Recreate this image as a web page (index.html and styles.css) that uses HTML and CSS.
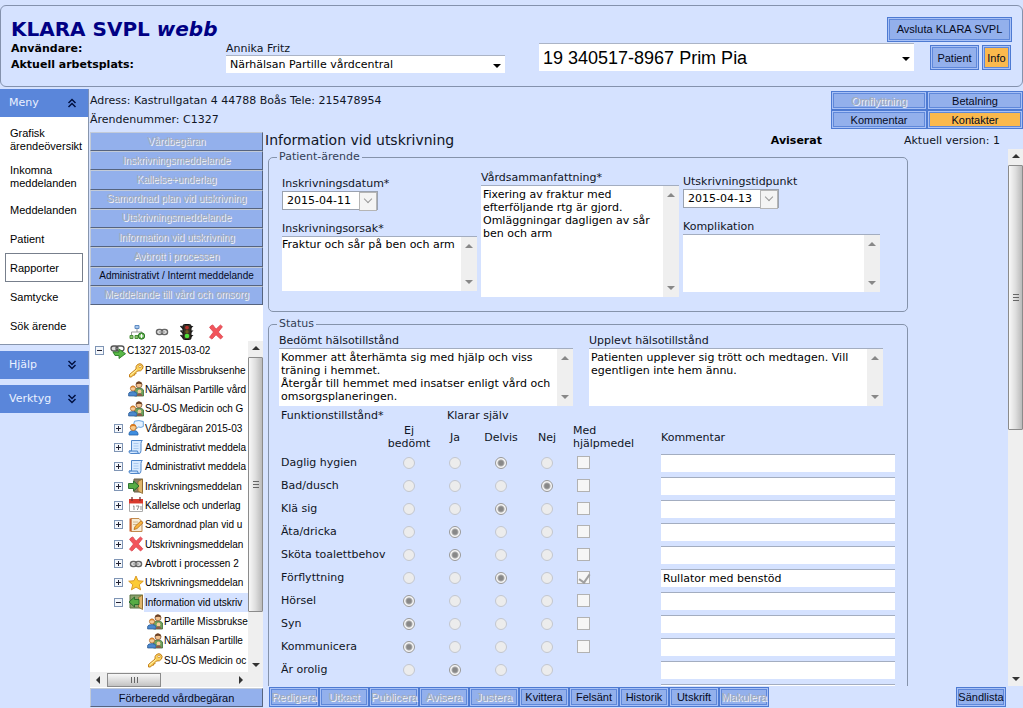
FILE: index.html
```html
<!DOCTYPE html>
<html lang="sv">
<head>
<meta charset="utf-8">
<title>KLARA SVPL webb</title>
<link rel="stylesheet" href="styles.css">
</head>
<body>
<svg class="defs" aria-hidden="true">
  <symbol id="key" viewBox="0 0 16 16"><path d="M1.500 12.500 8 7q-.5-3 1.500-4.500Q12 .8 14 2.500T14.500 7Q13 9.500 9.500 9L8 10.500v1.300H6.500v1.400H5L3.500 15H1.500z" fill="#fbd25a" stroke="#c4801c"/><circle cx="12" cy="4.500" r="1.200" fill="#fff" stroke="#c4801c" stroke-width=".7"/><path d="M2.500 13 9 7.500" stroke="#fff2b0"/></symbol>
  <symbol id="people" viewBox="0 0 16 16"><path d="M6.500 15V9q0-2 4-2t5 2v6z" fill="#6fa35c" stroke="#3f6b37" stroke-width=".8"/><circle cx="11" cy="3.800" r="3" fill="#f1c08e" stroke="#72492b" stroke-width=".7"/><path d="M7.800 3.500Q8.500.5 11 .6t3.300 3q-3-1.700-6.500-.1z" fill="#6b4226"/><circle cx="5" cy="7.500" r="2.600" fill="#f6cb98" stroke="#a05a22" stroke-width=".7"/><path d="M2.300 7Q3 4.600 5 4.700T7.700 7Q5 5.700 2.300 7z" fill="#d9822b"/><path d="M.6 15v-2.500Q1 10.600 5 10.600t4 2.400v2z" fill="#4b88cc" stroke="#28558c" stroke-width=".7"/><circle cx="11.500" cy="10.500" r="1.900" fill="#f6cb98"/><path d="M8.800 15q.2-2.700 2.700-2.700t2.800 2.700z" fill="#8a5a48"/></symbol>
  <symbol id="talk" viewBox="0 0 16 16"><path d="M6.500 1.200Q11-.2 15.300 1.500v5Q13 8 10.500 7L8 9V6.300L5.500 5z" fill="#e4f1ff" stroke="#5c9bd8" stroke-width=".9"/><path d="M1 15q-.5-4.500 4.500-4.500T10 15z" fill="#3f8ee0" stroke="#2362a8" stroke-width=".8"/><circle cx="5.200" cy="7.500" r="3" fill="#f8c987" stroke="#b5661e" stroke-width=".8"/><path d="M2.200 7q.3-3 3-3T8 6.500Q5 5.500 2.200 7z" fill="#d9791e"/></symbol>
  <symbol id="scroll" viewBox="0 0 16 16"><path d="M3.500 1.500h10.800q-1.300 1-1.300 3v7q0 3-2 3H2.800q-2 0-1.800-2.500h2.500z" fill="#d8eaff" stroke="#4f86c9"/><path d="M1 12h8.500q0 2.500 1.700 2.500" fill="#b9d7fa" stroke="#4f86c9"/><path d="M5.500 4.500h5M5.500 7h5M5.500 9.500h5" stroke="#a0c3ec" stroke-width=".8"/></symbol>
  <symbol id="door" viewBox="0 0 16 16"><path d="M6 1h8.500v13H6z" fill="#8a7f62" stroke="#6a5f45"/><path d="M10 3.500 14.500 1v14.500L10 13z" fill="#e0b66c" stroke="#8b672c" stroke-width=".8"/><path d="M.5 5.500h5V3L11 8l-5.500 5v-2.500h-5z" fill="#57ac45" stroke="#23692a" stroke-width=".9"/></symbol>
  <symbol id="doorout" viewBox="0 0 16 16"><path d="M2 1h12.500v13H2z" fill="#8ba06a" stroke="#56703f"/><path d="M10.500 3.500 14.500 1v14.500l-4-2.500z" fill="#e0b66c" stroke="#8b672c" stroke-width=".8"/><path d="M11 5.500H6.500V3L1 8l5.500 5v-2.500H11z" fill="#57ac45" stroke="#23692a" stroke-width=".9"/></symbol>
  <symbol id="calendar" viewBox="0 0 16 16"><path d="M1.500 2.500h13v12h-13z" fill="#fff" stroke="#aaa"/><path d="M1 2h14v5H1z" fill="#d83a2e"/><path d="M4 0v4M12 0v4" stroke="#733" stroke-width="1.300"/><path d="M1.500 6.500h13" stroke="#f0a49c"/><path d="m5 9.500 1-.7V13M8 9h3l-1.700 4M13 9v4" stroke="#777" fill="none" stroke-width=".8"/></symbol>
  <symbol id="note" viewBox="0 0 16 16"><path d="M3 1.500h8l3 3v10H3z" fill="#f7ecd6" stroke="#c28b4f"/><path d="M2.500 1.500v13" stroke="#c9612d" stroke-width="2"/><path d="M5 5h5M5 7.500h4" stroke="#c9a97a" stroke-width=".8"/><path d="m6 12.500 1-3L13 3.800l2 2-6 5.800z" fill="#f8b33c" stroke="#b06817" stroke-width=".8"/></symbol>
  <symbol id="cross" viewBox="0 0 16 16"><path d="M2.700 2 4.800.9 8 5.200 12.400 1l2 1.700L10.300 8l4.500 4.800-2.200 2.200L8 10.800 4 15.100l-2.500-1.800L5.500 8 1.600 3.500z" fill="#f2545b" stroke="#d9444e" stroke-width=".8"/></symbol>
  <symbol id="chain" viewBox="0 0 16 16"><rect x="2.500" y="5.500" width="6" height="5" rx="2.500" fill="none" stroke="#666" stroke-width="1.500"/><rect x="7.500" y="5.500" width="6" height="5" rx="2.500" fill="none" stroke="#666" stroke-width="1.500"/><path d="M4.500 8h7" stroke="#999" stroke-width="1.400"/></symbol>
  <symbol id="star" viewBox="0 0 16 16"><path d="m8 1 2 4.700 5.300.5-4 3.500 1.300 5.100L8 12.100l-4.600 2.700 1.300-5.100-4-3.500L6 5.700z" fill="#fccb35" stroke="#d8931b" stroke-width=".9"/></symbol>
  <symbol id="link" viewBox="0 0 16 16"><rect x="1" y="3" width="7" height="5" rx="2.500" fill="#ddd" stroke="#555" stroke-width="1.300"/><rect x="6" y="3" width="8" height="5" rx="2.500" fill="none" stroke="#555" stroke-width="1.300"/><path d="M3 9h6V6l6.500 4.700L9 15.500v-3H5z" fill="#5ab848" stroke="#2a7a26" stroke-width=".9"/></symbol>
  <symbol id="nodes" viewBox="0 0 16 16"><path d="M8 4v4M2.500 11V8H13v2" fill="none" stroke="#999"/><path d="M6 1.500h4v3H6z" fill="#a8c8ee" stroke="#5f8bc2"/><path d="M1 11.500h3v3H1zM6 11.500h3v3H6z" fill="#8bc46d" stroke="#4a8f3a"/><circle cx="12.500" cy="12" r="3.200" fill="#58ae42" stroke="#2b7428"/><path d="M12.500 10v4M10.500 12h4" stroke="#fff" stroke-width="1.200"/></symbol>
  <symbol id="traffic" viewBox="0 0 16 16"><path d="M1.500 2 14.500 2l-3 3zM1.500 6.500h13l-3 3zM1.500 11h13l-3 3z" fill="#222"/><path d="m1.500 2 3 3M1.500 6.500l3 3M1.500 11l3 3" stroke="#222" stroke-width="1.500"/><rect x="4" y=".5" width="8" height="15" rx="1.500" fill="#383025" stroke="#111"/><circle cx="8" cy="3.600" r="1.900" fill="#b6312a"/><circle cx="8" cy="7.800" r="1.700" fill="#6b5a20"/><circle cx="8" cy="12" r="2.300" fill="#4fe23a"/></symbol>
  <symbol id="up2" viewBox="0 0 10 10"><path d="M1.500 5 5 1.500 8.500 5M1.500 9 5 5.500 8.500 9" fill="none" stroke="#001040" stroke-width="1.500"/></symbol>
  <symbol id="down2" viewBox="0 0 10 10"><path d="M1.500 1 5 4.500 8.500 1M1.500 5 5 8.500 8.500 5" fill="none" stroke="#001040" stroke-width="1.500"/></symbol>
</svg>

<header class="top">
  <div class="top-row">
    <h1>KLARA SVPL <em>webb</em></h1>
    <button class="btn btn-exit">Avsluta KLARA SVPL</button>
  </div>
  <div class="top-fields">
    <div class="user">
      <b>Användare:</b><span>Annika Fritz</span>
      <label for="place">Aktuell arbetsplats:</label>
      <div class="combo"><select id="place"><option>Närhälsan Partille vårdcentral</option></select></div>
    </div>
    <div class="combo combo-patient"><select aria-label="Vald patient"><option>19 340517-8967 Prim Pia</option></select></div>
    <div class="top-buttons">
      <button class="btn btn-patient">Patient</button>
      <button class="btn btn-info orange">Info</button>
    </div>
  </div>
</header>

<div class="main">
  <nav class="side">
    <button class="side-head">Meny<svg><use href="#up2"/></svg></button>
    <div class="side-body">
      <a href="#">Grafisk ärendeöversikt</a>
      <a href="#">Inkomna meddelanden</a>
      <a href="#">Meddelanden</a>
      <a href="#">Patient</a>
      <a href="#" class="current">Rapporter</a>
      <a href="#">Samtycke</a>
      <a href="#">Sök ärende</a>
    </div>
    <button class="side-head">Hjälp<svg><use href="#down2"/></svg></button>
    <button class="side-head">Verktyg<svg><use href="#down2"/></svg></button>
  </nav>

  <div class="work">
    <div class="info">
      <div class="address">
        <p>Adress: Kastrullgatan 4 44788 Boås Tele: 215478954</p>
        <p>Ärendenummer: C1327</p>
      </div>
      <div class="info-buttons">
        <button class="btn" disabled>Omflyttning</button>
        <button class="btn">Betalning</button>
        <button class="btn">Kommentar</button>
        <button class="btn orange">Kontakter</button>
      </div>
    </div>

    <div class="columns">
      <aside class="case">
        <div class="stack">
          <button class="flat" disabled>Vårdbegäran</button>
          <button class="flat" disabled>Inskrivningsmeddelande</button>
          <button class="flat" disabled>Kallelse+underlag</button>
          <button class="flat" disabled>Samordnad plan vid utskrivning</button>
          <button class="flat" disabled>Utskrivningsmeddelande</button>
          <button class="flat" disabled>Information vid utskrivning</button>
          <button class="flat" disabled>Avbrott i processen</button>
          <button class="flat">Administrativt / Internt meddelande</button>
          <button class="flat" disabled>Meddelande till vård och omsorg</button>
        </div>
        <div class="tools">
          <button aria-label="Lägg till"><svg><use href="#nodes"/></svg></button>
          <button aria-label="Länka"><svg><use href="#chain"/></svg></button>
          <button aria-label="Status"><svg><use href="#traffic"/></svg></button>
          <button aria-label="Ta bort"><svg><use href="#cross"/></svg></button>
        </div>
        <div class="tree-box">
          <ul class="tree">
            <li><i class="tog minus"></i><svg><use href="#link"/></svg><span>C1327 2015-03-02</span></li>
            <li class="l1"><i class="gap"></i><svg><use href="#key"/></svg><span>Partille Missbruksenhe</span></li>
            <li class="l1"><i class="gap"></i><svg><use href="#people"/></svg><span>Närhälsan Partille vård</span></li>
            <li class="l1"><i class="gap"></i><svg><use href="#people"/></svg><span>SU-ÖS Medicin och G</span></li>
            <li class="l1"><i class="tog"></i><svg><use href="#talk"/></svg><span>Vårdbegäran 2015-03</span></li>
            <li class="l1"><i class="tog"></i><svg><use href="#scroll"/></svg><span>Administrativt meddela</span></li>
            <li class="l1"><i class="tog"></i><svg><use href="#scroll"/></svg><span>Administrativt meddela</span></li>
            <li class="l1"><i class="tog"></i><svg><use href="#door"/></svg><span>Inskrivningsmeddelan</span></li>
            <li class="l1"><i class="tog"></i><svg><use href="#calendar"/></svg><span>Kallelse och underlag</span></li>
            <li class="l1"><i class="tog"></i><svg><use href="#note"/></svg><span>Samordnad plan vid u</span></li>
            <li class="l1"><i class="tog"></i><svg><use href="#cross"/></svg><span>Utskrivningsmeddelan</span></li>
            <li class="l1"><i class="tog"></i><svg><use href="#chain"/></svg><span>Avbrott i processen 2</span></li>
            <li class="l1"><i class="tog"></i><svg><use href="#star"/></svg><span>Utskrivningsmeddelan</span></li>
            <li class="l1"><i class="tog minus"></i><svg><use href="#doorout"/></svg><span class="picked">Information vid utskriv</span></li>
            <li class="l2"><i class="gap"></i><svg><use href="#people"/></svg><span>Partille Missbrukse</span></li>
            <li class="l2"><i class="gap"></i><svg><use href="#people"/></svg><span>Närhälsan Partille</span></li>
            <li class="l2"><i class="gap"></i><svg><use href="#key"/></svg><span>SU-ÖS Medicin oc</span></li>
          </ul>
          <div class="vbar"><i class="up"></i><i class="thumb tree-thumb"></i><i class="down"></i></div>
        </div>
        <div class="hbar"><i class="left"></i><i class="thumb"></i><i class="right"></i></div>
        <button class="flat prepare">Förberedd vårdbegäran</button>
      </aside>

      <main class="doc">
        <div class="doc-head">
          <h2>Information vid utskrivning</h2>
          <b>Aviserat</b>
          <span>Aktuell version: 1</span>
        </div>
        <div class="doc-body">
          <form class="form">
            <fieldset>
              <legend>Patient-ärende</legend>
              <div class="patient">
                <div class="col first">
                  <label for="in-date">Inskrivningsdatum*</label>
                  <div class="date"><select id="in-date"><option>2015-04-11</option></select></div>
                  <label for="cause">Inskrivningsorsak*</label>
                  <div class="area short"><textarea id="cause">Fraktur och sår på ben och arm</textarea><div class="mini"><i class="up"></i><i class="down"></i></div></div>
                </div>
                <div class="col">
                  <label for="summary">Vårdsammanfattning*</label>
                  <div class="area tall"><textarea id="summary">Fixering av fraktur med efterföljande rtg är gjord. Omläggningar dagligen av sår ben och arm</textarea><div class="mini"><i class="up"></i><i class="down"></i></div></div>
                </div>
                <div class="col third">
                  <label for="out-date">Utskrivningstidpunkt</label>
                  <div class="date"><select id="out-date"><option>2015-04-13</option></select></div>
                  <label for="compl">Komplikation</label>
                  <div class="area"><textarea id="compl"></textarea><div class="mini"><i class="up"></i><i class="down"></i></div></div>
                </div>
              </div>
            </fieldset>
            <fieldset class="status">
              <legend>Status</legend>
              <div class="health">
                <div class="col">
                  <label for="judged">Bedömt hälsotillstånd</label>
                  <div class="area"><textarea id="judged">Kommer att återhämta sig med hjälp och viss träning i hemmet.
Återgår till hemmet med insatser enligt vård och omsorgsplaneringen.</textarea><div class="mini"><i class="up"></i><i class="down"></i></div></div>
                </div>
                <div class="col">
                  <label for="felt">Upplevt hälsotillstånd</label>
                  <div class="area"><textarea id="felt">Patienten upplever sig trött och medtagen. Vill egentligen inte hem ännu.</textarea><div class="mini"><i class="up"></i><i class="down"></i></div></div>
                </div>
              </div>
              <table>
                <colgroup><col class="c-name"><col class="c-r"><col class="c-r"><col class="c-r"><col class="c-r"><col class="c-help"><col></colgroup>
                <thead>
                  <tr class="h1"><th class="lead" colspan="2">Funktionstillstånd*</th><th class="lead self" colspan="5">Klarar själv</th></tr>
                  <tr class="h2"><td></td><th>Ej bedömt</th><th>Ja</th><th>Delvis</th><th>Nej</th><th class="lead help">Med hjälpmedel</th><th class="lead note">Kommentar</th></tr>
                </thead>
                <tbody>
                  <tr><th>Daglig hygien</th><td><input type="radio" name="a" aria-label="Ej bedömt" disabled></td><td><input type="radio" name="a" aria-label="Ja" disabled></td><td><input type="radio" name="a" aria-label="Delvis" disabled checked></td><td><input type="radio" name="a" aria-label="Nej" disabled></td><td><input type="checkbox" aria-label="Med hjälpmedel" disabled></td><td><input type="text" aria-label="Kommentar"></td></tr>
                  <tr><th>Bad/dusch</th><td><input type="radio" name="b" aria-label="Ej bedömt" disabled></td><td><input type="radio" name="b" aria-label="Ja" disabled></td><td><input type="radio" name="b" aria-label="Delvis" disabled></td><td><input type="radio" name="b" aria-label="Nej" disabled checked></td><td><input type="checkbox" aria-label="Med hjälpmedel" disabled></td><td><input type="text" aria-label="Kommentar"></td></tr>
                  <tr><th>Klä sig</th><td><input type="radio" name="c" aria-label="Ej bedömt" disabled></td><td><input type="radio" name="c" aria-label="Ja" disabled></td><td><input type="radio" name="c" aria-label="Delvis" disabled checked></td><td><input type="radio" name="c" aria-label="Nej" disabled></td><td><input type="checkbox" aria-label="Med hjälpmedel" disabled></td><td><input type="text" aria-label="Kommentar"></td></tr>
                  <tr><th>Äta/dricka</th><td><input type="radio" name="d" aria-label="Ej bedömt" disabled></td><td><input type="radio" name="d" aria-label="Ja" disabled checked></td><td><input type="radio" name="d" aria-label="Delvis" disabled></td><td><input type="radio" name="d" aria-label="Nej" disabled></td><td><input type="checkbox" aria-label="Med hjälpmedel" disabled></td><td><input type="text" aria-label="Kommentar"></td></tr>
                  <tr><th>Sköta toalettbehov</th><td><input type="radio" name="e" aria-label="Ej bedömt" disabled></td><td><input type="radio" name="e" aria-label="Ja" disabled checked></td><td><input type="radio" name="e" aria-label="Delvis" disabled></td><td><input type="radio" name="e" aria-label="Nej" disabled></td><td><input type="checkbox" aria-label="Med hjälpmedel" disabled></td><td><input type="text" aria-label="Kommentar"></td></tr>
                  <tr><th>Förflyttning</th><td><input type="radio" name="f" aria-label="Ej bedömt" disabled></td><td><input type="radio" name="f" aria-label="Ja" disabled></td><td><input type="radio" name="f" aria-label="Delvis" disabled checked></td><td><input type="radio" name="f" aria-label="Nej" disabled></td><td><input type="checkbox" aria-label="Med hjälpmedel" disabled checked></td><td><input type="text" aria-label="Kommentar" value="Rullator med benstöd"></td></tr>
                  <tr><th>Hörsel</th><td><input type="radio" name="g" aria-label="Ej bedömt" disabled checked></td><td><input type="radio" name="g" aria-label="Ja" disabled></td><td><input type="radio" name="g" aria-label="Delvis" disabled></td><td><input type="radio" name="g" aria-label="Nej" disabled></td><td><input type="checkbox" aria-label="Med hjälpmedel" disabled></td><td><input type="text" aria-label="Kommentar"></td></tr>
                  <tr><th>Syn</th><td><input type="radio" name="h" aria-label="Ej bedömt" disabled checked></td><td><input type="radio" name="h" aria-label="Ja" disabled></td><td><input type="radio" name="h" aria-label="Delvis" disabled></td><td><input type="radio" name="h" aria-label="Nej" disabled></td><td><input type="checkbox" aria-label="Med hjälpmedel" disabled></td><td><input type="text" aria-label="Kommentar"></td></tr>
                  <tr><th>Kommunicera</th><td><input type="radio" name="i" aria-label="Ej bedömt" disabled checked></td><td><input type="radio" name="i" aria-label="Ja" disabled></td><td><input type="radio" name="i" aria-label="Delvis" disabled></td><td><input type="radio" name="i" aria-label="Nej" disabled></td><td><input type="checkbox" aria-label="Med hjälpmedel" disabled></td><td><input type="text" aria-label="Kommentar"></td></tr>
                  <tr><th>Är orolig</th><td><input type="radio" name="j" aria-label="Ej bedömt" disabled></td><td><input type="radio" name="j" aria-label="Ja" disabled checked></td><td><input type="radio" name="j" aria-label="Delvis" disabled></td><td><input type="radio" name="j" aria-label="Nej" disabled></td><td></td><td><input type="text" aria-label="Kommentar"></td></tr>
                  <tr><th></th><td></td><td></td><td></td><td></td><td></td><td><input type="text" aria-label="Kommentar"></td></tr>
                </tbody>
              </table>
            </fieldset>
          </form>
          <div class="vbar"><i class="up"></i><i class="thumb doc-thumb"></i><i class="down"></i></div>
        </div>
        <div class="actions">
          <button class="btn" disabled>Redigera</button>
          <button class="btn" disabled>Utkast</button>
          <button class="btn" disabled>Publicera</button>
          <button class="btn" disabled>Avisera</button>
          <button class="btn" disabled>Justera</button>
          <button class="btn">Kvittera</button>
          <button class="btn">Felsänt</button>
          <button class="btn">Historik</button>
          <button class="btn">Utskrift</button>
          <button class="btn" disabled>Makulera</button>
          <button class="btn send">Sändlista</button>
        </div>
      </main>
    </div>
  </div>
</div>
</body>
</html>
```

FILE: styles.css
```css
* { box-sizing: border-box; }
html, body { height: 100%; }
body {
  margin: 0;
  padding-top: 5px;
  display: flex;
  flex-direction: column;
  overflow: hidden;
  background: #d5e2ff;
  color: #101525;
  font: 11px/14px "DejaVu Sans", Verdana, sans-serif;
}
.defs { display: none; }
h1, h2, p, ul { margin: 0; padding: 0; font-weight: normal; }
button, select, textarea, input { font: inherit; color: inherit; margin: 0; border-radius: 0; }
button { padding: 0; border: 0; background: none; white-space: nowrap; }

/* Buttons */
.btn, .flat { font: 11px/14px "Liberation Sans", Arial, sans-serif; color: #050a1c; background: #93b0ec; }
.btn {
  height: 20px;
  border: 1px solid #4d7ad2;
  box-shadow: inset 0 0 0 1px #a8c1f6, inset 0 0 0 2px #5f88da;
}
.orange { background: #fbb94d; }
.flat { border: 1px solid; border-color: #c3cbd8 #56647f #56647f #c3cbd8; }
.stack .flat { font-size: 10px; }
.btn:disabled, .flat:disabled { color: #a3abba; text-shadow: 1px 1px 0 #f4f4f4; }

/* Page header */
.top { flex: none; height: 82px; padding: 10px 10px 0; border: 1px solid #8492ad; border-radius: 6px; }
.top-row { display: flex; justify-content: space-between; align-items: center; height: 26px; }
h1 { font-size: 20px; font-weight: bold; line-height: 26px; color: #000084; }
.btn-exit { width: 125px; height: 25px; }
.top-fields { display: flex; align-items: flex-start; }
.user { flex: none; display: grid; grid-template-columns: 215px 279px; grid-template-rows: 13px 18px; align-items: center; }
.user b, .user label { font-weight: bold; color: #000; }
.user label { padding-top: 2px; }
.combo { position: relative; }
.combo select { display: block; width: 100%; height: 18px; padding: 0 4px; border: 0; border-top: 1px solid #abb4c6; background: #fff; color: #000; appearance: none; }
.combo::after { content: ""; position: absolute; right: 4px; top: 50%; border: 4px solid transparent; border-top-color: #000; border-bottom: 0; }
.combo-patient { flex: 1; margin: 1px 16px 0 34px; }
.combo-patient select { height: 28px; font: 18px/26px "Liberation Sans", Arial, sans-serif; }
.top-buttons { display: flex; gap: 3px; padding: 3px 1px 0 0; }
.top-buttons .btn { height: 25px; }
.btn-patient { width: 49px; }
.btn-info { width: 29px; }

.main { flex: 1; min-height: 0; display: flex; padding: 2px 0 1px; }

/* Left navigation */
.side { flex: none; width: 89px; }
.side-head { display: flex; justify-content: space-between; align-items: center; width: 100%; height: 28px; margin-bottom: 6px; padding: 0 11px 0 9px; background: #5a86da; color: #eaf1ff; border-right: 1px solid #7b90b8; }
.side-head svg { width: 10px; height: 10px; }
.side-body { margin: -6px 0 6px; padding: 4px 5px; background: #fff; border: solid #8795ad; border-width: 0 1px 1px 0; }
.side-body a { display: flex; align-items: center; min-height: 29px; padding: 5px 4px 4px; border: 1px solid transparent; font: 11px/13px "Liberation Sans", Arial, sans-serif; color: #000; text-decoration: none; }
.side-body .current { border-color: #777f8c; }

.work { flex: 1; min-width: 0; display: flex; flex-direction: column; padding-left: 1px; }
.info { flex: none; display: flex; justify-content: space-between; height: 43px; }
.address { padding-top: 2px; }
.address p { line-height: 19px; }
.info-buttons { display: grid; grid-template-columns: 96px 96px; align-content: start; padding-top: 2px; }
.info-buttons .btn { height: 19px; }

.columns { flex: 1; min-height: 0; display: flex; gap: 5px; }

/* Case tree */
.case { flex: none; width: 173px; display: flex; flex-direction: column; background: #fff; }
.stack { flex: none; display: grid; grid-auto-rows: 1fr; height: 173px; }
.tools { flex: none; display: flex; align-items: flex-end; gap: 9px; height: 36px; padding: 0 0 1px 39px; }
.tools button { width: 16px; height: 16px; }
.tools button:last-child { margin-left: 4px; }
.tools svg { display: block; width: 16px; height: 16px; }
.tree-box { flex: 1; min-height: 0; display: flex; }
.tree { flex: 1; min-width: 0; display: grid; grid-auto-rows: 1fr; padding-bottom: 2px; list-style: none; overflow: hidden; font: 10px/14px "Liberation Sans", Arial, sans-serif; color: #000; }
.tree li { display: flex; align-items: center; min-width: 0; overflow: hidden; padding-left: 5px; white-space: nowrap; }
.tree .l1 { padding-left: 24px; }
.tree .l2 { padding-left: 43px; }
.tree svg { flex: none; width: 16px; height: 16px; }
.tree i { flex: none; width: 9px; height: 9px; margin-right: 5px; }
.tree > :first-child i { margin-right: 6px; }
.tree span { flex: 1; padding-left: 1px; line-height: 19px; overflow: hidden; }
.tree .picked { background: #d5e2ff; }
.tog { border: 1px solid #7f95b5; background: linear-gradient(#223, #223) center / 5px 1px no-repeat, linear-gradient(#223, #223) center / 1px 5px no-repeat, #f4f7fb; }
.tog.minus { background: linear-gradient(#223, #223) center / 5px 1px no-repeat, #f4f7fb; }
.prepare { flex: none; height: 19px; margin-top: 1px; }

/* Scroll bars */
.vbar, .mini { display: flex; flex-direction: column; align-items: center; background: #efefef; }
.vbar { flex: none; width: 15px; padding: 5px 0; }
.vbar .thumb { width: 15px; margin: 7px 0 auto; border: 1px solid #8b8b8b; border-radius: 1px; background: repeating-linear-gradient(#666 0 1px, transparent 1px 3px) center / 6px 7px no-repeat, linear-gradient(90deg, #f8f8f8, #dedede 50%, #bababa); }
.tree-thumb { height: 255px; }
.doc-thumb { height: 265px; }
.up, .down, .left, .right { width: 0; height: 0; border: 4px solid transparent; }
.up { border-bottom-color: #333; border-top: 0; }
.down { border-top-color: #333; border-bottom: 0; }
.left { border-right-color: #333; border-left: 0; }
.right { border-left-color: #333; border-right: 0; }
.mini { width: 16px; justify-content: space-between; padding: 7px 0; }
.mini .up { border-bottom-color: #888; }
.mini .down { border-top-color: #888; }
.hbar { flex: none; display: flex; align-items: center; height: 15px; padding: 0 20px 0 6px; background: #efefef; }
.hbar .thumb { width: 54px; height: 14px; margin: 0 auto 0 7px; border: 1px solid #8b8b8b; background: repeating-linear-gradient(90deg, #666 0 1px, transparent 1px 3px) center / 7px 6px no-repeat, linear-gradient(#f8f8f8, #dedede 50%, #c2c2c2); }

/* Document */
.doc { flex: 1; min-width: 0; display: flex; flex-direction: column; }
.doc-head { flex: none; display: flex; align-items: center; height: 17px; padding-right: 23px; margin-left: -3px; }
.doc-head h2 { flex: 1; font-size: 14px; line-height: 17px; }
.doc-head b { margin-right: 82px; color: #000; }
.doc-body { flex: 1; min-height: 0; display: flex; overflow: hidden; }
.form { flex: 1; min-width: 0; padding-right: 100px; overflow: hidden; }
fieldset { min-width: 0; margin: 0 0 4px; padding: 0 12px; border: 1px solid #8593ab; border-radius: 5px; }
legend { margin-left: -4px; padding: 0 2px; line-height: 16px; color: #333e55; }
.patient { display: grid; grid-template-columns: 195px 198px 197px; gap: 4px; align-items: start; padding: 6px 0 14px 1px; }
.col label { display: block; }
.col.first { padding-top: 6px; }
.col.third { padding-top: 4px; }
.date { position: relative; width: 96px; margin-bottom: 12px; }
.date select { display: block; width: 100%; height: 19px; padding: 0 4px; border: 1px solid #9aa2b0; background: #fff; color: #000; appearance: none; }
.date::before { content: ""; position: absolute; right: 1px; top: 1px; width: 16px; height: 17px; border: 1px solid #b5b5b5; background: #f4f4f4; }
.date::after { content: ""; position: absolute; right: 7px; top: 5px; width: 5px; height: 5px; border: solid #999; border-width: 0 1px 1px 0; transform: rotate(45deg); }
.area { display: grid; grid-template-columns: 1fr 16px; height: 58px; border-top: 1px solid #a3adc0; }
.area.short { height: 55px; }
.area.tall { height: 112px; }
textarea { display: block; width: 100%; height: 100%; padding: 2px; border: 0; background: #fff; color: #000; line-height: 13px; resize: none; overflow: hidden; }
.short textarea { padding: 1px 0; }
.status { padding: 0 10px; }
.status legend { margin-left: -2px; }
.health { display: grid; grid-template-columns: 294px 294px; gap: 16px; padding-top: 2px; }

table { width: 100%; table-layout: fixed; border-collapse: collapse; }
.c-name { width: 107px; }
.c-r { width: 46px; }
.c-help { width: 91px; }
th, td { height: 23px; padding: 0; font-weight: normal; text-align: center; line-height: 13px; }
tbody th, th.lead { text-align: left; padding-left: 2px; }
tbody th { white-space: nowrap; }
.h1 th { height: 18px; }
.h2 th { height: 26px; }
.h1 .self { padding-left: 15px; }
.h2 .help { padding: 0 20px 0 3px; }
.h2 .note { padding-left: 0; }
tbody::before { content: ""; display: block; height: 1px; }
td:nth-child(6) { text-align: left; padding-left: 7px; }
td:nth-child(7) { text-align: left; }
input[type="radio"], input[type="checkbox"] { display: block; appearance: none; }
input[type="radio"] { width: 12px; height: 12px; margin: 0 auto; border: 1px solid #c3c7cf; border-radius: 50%; background: #ececec; }
input[type="radio"]:checked { border-color: #999; background: radial-gradient(circle, #888 0 2px, #aaa 3px, #f6f6f6 4px); }
input[type="checkbox"] { position: relative; width: 13px; height: 13px; border: 1px solid #b2b2b2; background: #f6f6f6; }
input[type="checkbox"]:checked::after { content: ""; position: absolute; left: 3px; top: 0; width: 5px; height: 9px; border: solid #a0a0a0; border-width: 0 2px 2px 0; transform: rotate(35deg); }
input[type="text"] { display: block; width: 234px; height: 18px; padding: 0 2px; border: 0; border-top: 1px solid #a3adc0; background: #fff; color: #000; }

.actions { flex: none; display: flex; height: 21px; padding: 1px 17px 0 1px; }
.actions .btn { width: 50px; }
.actions .send { margin-left: auto; }
```
